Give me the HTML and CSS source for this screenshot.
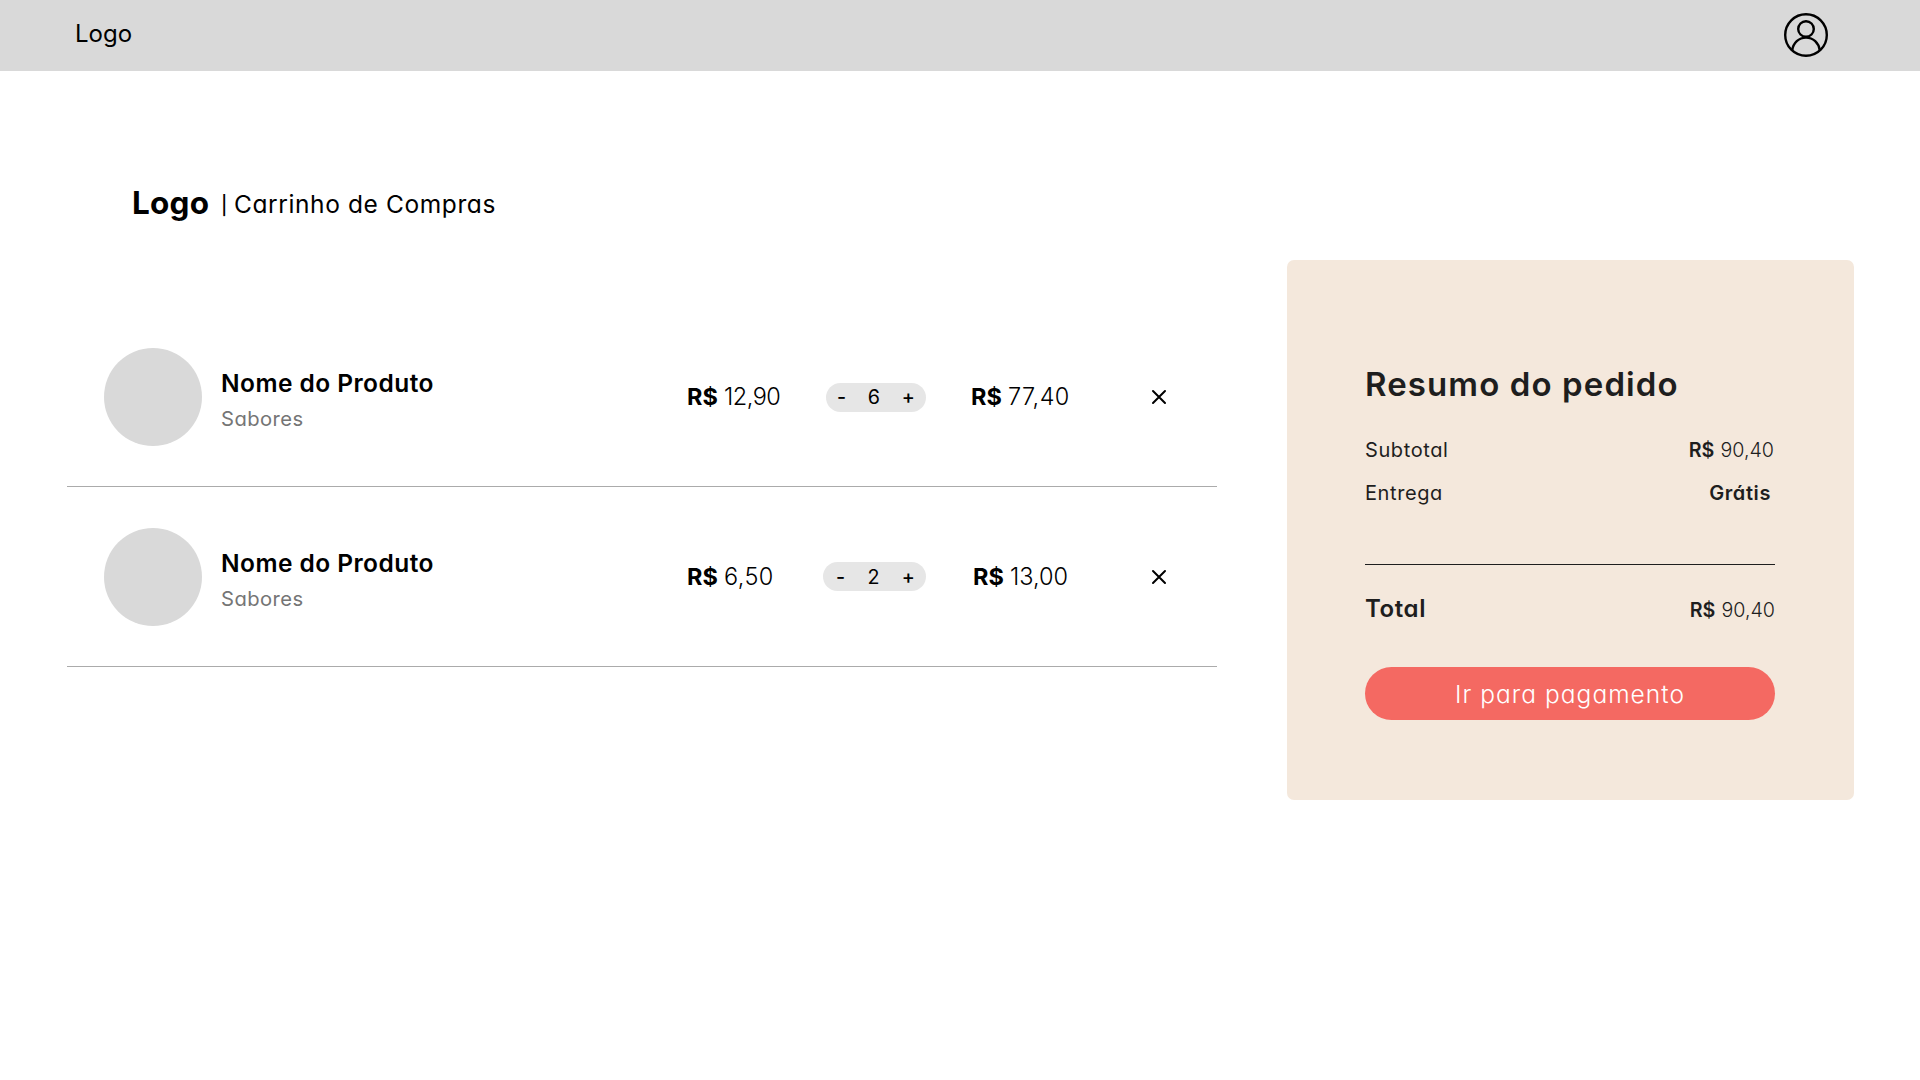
FILE: index.html
```html
<!DOCTYPE html>
<html lang="pt-BR">
<head>
<meta charset="utf-8">
<title>Carrinho de Compras</title>
<link rel="stylesheet" href="styles.css">
</head>
<body>
<header class="topbar">
  <a class="topbar-logo">Logo</a>
  <svg class="user-icon" viewBox="0 0 46 46" fill="none" stroke="#000" stroke-width="2.4">
    <circle cx="23" cy="23" r="20.8"/>
    <circle cx="23" cy="17" r="7.8"/>
    <path d="M9.200 38.400C10.200 31 15.800 25.600 23 25.600S35.800 31 36.800 38.400"/>
  </svg>
</header>
<main class="page">
  <section class="cart">
    <h1 class="cart-title"><span class="brand">Logo</span><span class="bar">|</span><span class="crumb">Carrinho de Compras</span></h1>
    <article class="item">
      <div class="thumb"></div>
      <div class="info"><h2 class="name">Nome do Produto</h2><p class="flavor">Sabores</p></div>
      <div class="price"><b class="cur">R$</b><span class="val tight">12,90</span></div>
      <div class="qty"><span class="sign">-</span><span class="num">6</span><span class="sign">+</span></div>
      <div class="price"><b class="cur">R$</b><span class="val loose">77,40</span></div>
      <svg class="remove" viewBox="0 0 16 16" stroke="#000" stroke-width="2" stroke-linecap="round"><path d="M2 2l12 12M14 2L2 14"/></svg>
    </article>
    <article class="item item-wide">
      <div class="thumb"></div>
      <div class="info"><h2 class="name">Nome do Produto</h2><p class="flavor">Sabores</p></div>
      <div class="price"><b class="cur">R$</b><span class="val loose">6,50</span></div>
      <div class="qty"><span class="sign">-</span><span class="num">2</span><span class="sign">+</span></div>
      <div class="price"><b class="cur">R$</b><span class="val">13,00</span></div>
      <svg class="remove" viewBox="0 0 16 16" stroke="#000" stroke-width="2" stroke-linecap="round"><path d="M2 2l12 12M14 2L2 14"/></svg>
    </article>
  </section>
  <aside class="summary">
    <h2 class="summary-title">Resumo do pedido</h2>
    <div class="line"><span class="label">Subtotal</span><span class="amount"><b>R$</b><span class="sum">90,40</span></span></div>
    <div class="line"><span class="label">Entrega</span><b class="free">Grátis</b></div>
    <div class="line line-total"><b class="total-label">Total</b><span class="amount amount-total"><b>R$</b><span class="sum">90,40</span></span></div>
    <button class="pay">Ir para pagamento</button>
  </aside>
</main>
</body>
</html>
```
FILE: styles.css
```css
* { box-sizing: border-box; margin: 0; padding: 0; }
body { background: #fff; color: #000; font-family: Inter, sans-serif; font-feature-settings: "cv11"; }

.topbar { height: 71px; padding: 0 92px 4px 75px; background: #d9d9d9; display: flex; align-items: center; justify-content: space-between; }
.topbar-logo { font-size: 24px; font-feature-settings: normal; }
.user-icon { width: 46px; height: 46px; margin: 3px -1px 0 0; }

.page { display: flex; align-items: flex-start; justify-content: space-between; padding: 0 66px 0 67px; }
.cart { width: 1150px; }
.cart-title { display: flex; align-items: flex-start; height: 97px; margin: 96px 0 43px 65px; line-height: 71px; font-weight: 400; }
.brand { width: 89px; font-size: 31.5px; font-weight: 700; letter-spacing: 0.2px; }
.bar { width: 13px; font-size: 18.5px; font-weight: 500; line-height: 76px; }
.crumb { font-size: 24.5px; line-height: 74px; letter-spacing: 0.6px; }

.item { height: 180px; padding-left: 37px; border-bottom: 1px solid #ababab; display: flex; align-items: center; }
.thumb { width: 98px; height: 98px; border-radius: 50%; background: #d9d9d9; }
.info { width: 466px; margin-left: 19px; padding-top: 9px; }
.name { font-size: 24.5px; font-weight: 600; line-height: 35px; letter-spacing: 0.45px; }
.flavor { font-size: 20.2px; color: #757575; line-height: 35px; letter-spacing: 0.45px; }
.price { width: 139px; display: flex; font-size: 23.5px; }
.cur { width: 37px; font-weight: 700; }
.val { font-weight: 300; }
.tight { letter-spacing: -0.5px; }
.loose { letter-spacing: 0.4px; }
.qty { width: 100px; height: 29px; margin-right: 45px; padding: 0 11px; border-radius: 15px; background: #e6e6e6; font-size: 19.7px; display: flex; justify-content: space-between; align-items: center; }
.item:not(.item-wide) .qty { margin-top: 1px; }
.sign { font-weight: 500; }
.item-wide .qty { width: 103px; margin-left: -3px; padding: 0 11px 0 13px; }
.item-wide .qty + .price { padding-left: 2px; }
.remove { width: 16px; height: 16px; margin-left: 41px; }

.summary { width: 567px; height: 540px; margin-top: 189px; padding: 101px 79px 0 78px; border-radius: 7px; background: #f4e8dc; color: #1e1e1e; }
.summary-title { margin-bottom: 21px; font-size: 33px; font-weight: 600; line-height: 47px; letter-spacing: 1.1px; white-space: nowrap; }
.line { display: flex; justify-content: space-between; align-items: baseline; height: 43px; font-size: 20px; line-height: 43px; }
.label { letter-spacing: 0.6px; }
.amount { display: flex; gap: 6px; margin-right: 1px; font-size: 19.7px; }
.amount-total { margin-right: 0; }
.amount b, .free { font-weight: 600; }
.sum { font-weight: 350; }
.free { margin-right: 4px; letter-spacing: 0.6px; }
.line-total { height: 66px; border-top: 1px solid #1e1e1e; margin-top: 49px; padding-top: 22px; }
.total-label { font-size: 24px; font-weight: 600; letter-spacing: 0.6px; }
.pay { width: 410px; height: 53px; margin-top: 37px; border: 0; border-radius: 27px; background: #f46962; color: #fff; font: 350 24.5px Inter, sans-serif; font-feature-settings: "cv11"; letter-spacing: 1.05px; }
```
